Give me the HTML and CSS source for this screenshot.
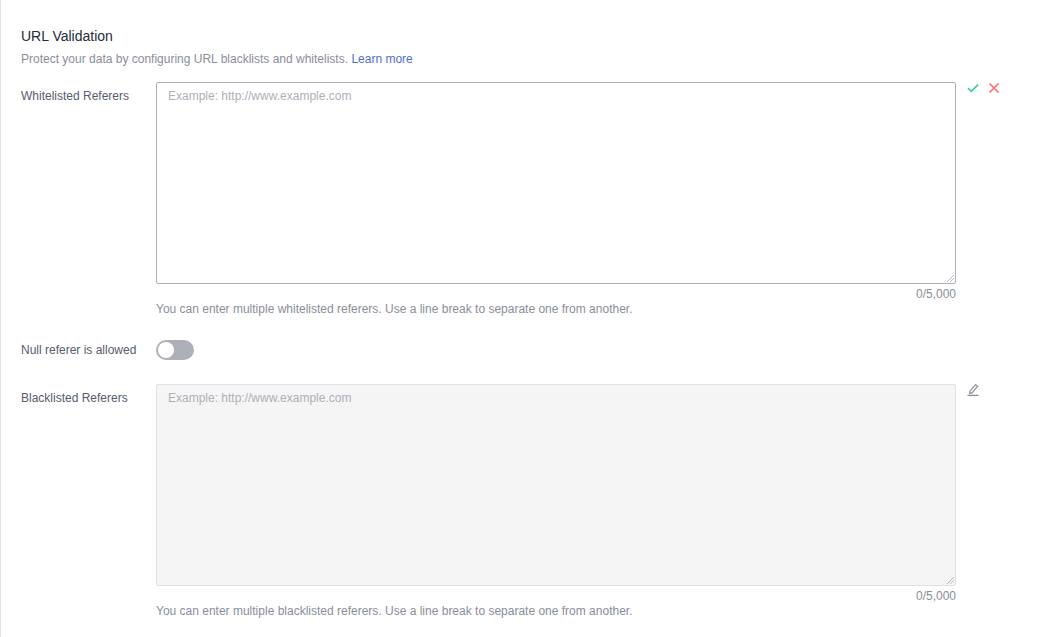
FILE: index.html
```html
<!DOCTYPE html>
<html lang="en">
<head>
<meta charset="utf-8">
<title>URL Validation</title>
<link rel="stylesheet" href="styles.css">
</head>
<body>
<main class="page">
  <h2 class="title">URL Validation</h2>
  <p class="desc">Protect your data by configuring URL blacklists and whitelists. <a class="link" href="#">Learn more</a></p>

  <section class="row">
    <label class="label">Whitelisted Referers</label>
    <div class="field">
      <textarea class="area" placeholder="Example: http://www.example.com"></textarea>
      <div class="count">0/5,000</div>
      <div class="hint">You can enter multiple whitelisted referers. Use a line break to separate one from another.</div>
    </div>
    <div class="actions">
      <svg class="icon" width="12" height="12" viewBox="0 0 12 12"><path d="M1 6.2 4.4 9.4 11 2.6" fill="none" stroke="#3fc9a0" stroke-width="1.7"/></svg>
      <svg class="icon" width="12" height="12" viewBox="0 0 12 12"><path d="M1.5 1.5 10.5 10.5M10.5 1.5 1.5 10.5" fill="none" stroke="#fa6e72" stroke-width="1.6"/></svg>
    </div>
  </section>

  <section class="row row-toggle">
    <label class="label label-toggle">Null referer is allowed</label>
    <span class="switch"><span class="knob"></span></span>
  </section>

  <section class="row">
    <label class="label">Blacklisted Referers</label>
    <div class="field">
      <textarea class="area area-disabled" disabled placeholder="Example: http://www.example.com"></textarea>
      <div class="count">0/5,000</div>
      <div class="hint">You can enter multiple blacklisted referers. Use a line break to separate one from another.</div>
    </div>
    <div class="actions">
      <svg class="icon" width="12" height="13" viewBox="0 0 12 13"><path d="M3 7.2 8.6 0.7 10.6 2.4 5 8.9 2.6 9.4Z" fill="none" stroke="#8a8e99" stroke-width="1.2"/><path d="M0.5 11.4H11.5" stroke="#8a8e99" stroke-width="1.3"/></svg>
    </div>
  </section>
</main>
</body>
</html>
```
FILE: styles.css
```css
* { box-sizing: border-box; }
html, body { margin: 0; height: 100%; background: #fff; }
body { font-family: "Liberation Sans", Arial, sans-serif; font-size: 12px; color: #575d6c; overflow: hidden; }
.page { height: 637px; padding: 28px 0 0 20px; border-left: 1px solid #dfe1e6; }
.title { margin: 0; font-size: 14px; line-height: 16px; font-weight: 400; color: #252b3a; }
.desc { margin: 8px 0 0; line-height: 14px; color: #8a8e99; }
.link { color: #526ecc; text-decoration: none; }
.row { display: flex; align-items: flex-start; margin-top: 16px; }
.label { flex: 0 0 135px; padding-top: 7px; line-height: 14px; color: #575d6c; }
.field { flex: 0 0 800px; display: flex; flex-direction: column; }
.area { display: block; width: 800px; height: 202px; padding: 6px 11px; border: 1px solid #adb0b8; border-radius: 2px; outline: 0; resize: vertical; background: #fff; font: 12px/14px "Liberation Sans", Arial, sans-serif; color: #575d6c; }
.area::placeholder { color: #adb0b8; opacity: 1; }
.area::-webkit-resizer { background: linear-gradient(135deg, transparent 0 46%, #b8bbc2 46% 56%, transparent 56% 68%, #b8bbc2 68% 78%, transparent 78%) no-repeat right 1px bottom 1px / 7px 7px; }
.area-disabled { background: #f5f5f6; border-color: #dfe1e6; }
.count { margin-top: 3px; line-height: 14px; text-align: right; color: #8a8e99; }
.hint { margin-top: 1px; line-height: 14px; color: #8a8e99; }
.actions { display: flex; gap: 9px; margin-left: 11px; }
.icon { display: block; }
.row-toggle { align-items: center; margin-top: 24px; }
.label-toggle { padding-top: 0; }
.switch { position: relative; display: block; width: 38px; height: 20px; border-radius: 10px; background: #adb0b8; }
.knob { position: absolute; top: 2px; left: 2px; width: 16px; height: 16px; border-radius: 50%; background: #fff; }
.row-toggle + .row { margin-top: 24px; }
```
